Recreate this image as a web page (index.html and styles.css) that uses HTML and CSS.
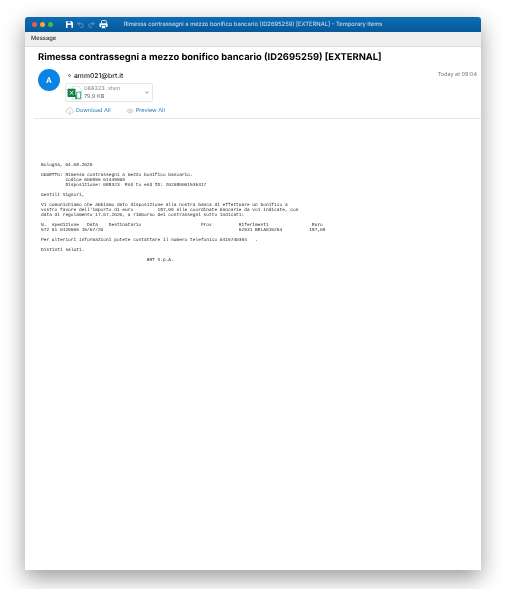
FILE: index.html
```html
<!DOCTYPE html>
<html lang="en">
<head>
    <meta charset="UTF-8">
    <meta name="viewport" content="width=device-width, initial-scale=1.0">
    <title>Rimessa contrassegni</title>
    <link rel="stylesheet" href="styles.css">
</head>
<body>

    <div class="window">
        <div class="titlebar">
            <div class="lights">
                <span class="light red"></span>
                <span class="light yellow"></span>
                <span class="light green"></span>
            </div>
            <div class="tools">
                <svg width="7" height="7" viewBox="0 0 9 9"><path d="M0 1a1 1 0 0 1 1-1h6l2 2v6a1 1 0 0 1-1 1H1a1 1 0 0 1-1-1z" fill="#fff"/><rect x="2" y="0.5" width="4" height="2.5" fill="#0b61a4"/><rect x="2" y="5" width="5" height="4" fill="#0b61a4"/></svg>
                <svg width="7" height="7" viewBox="0 0 9 9"><path d="M3.5 1L1 3.5 3.5 6M1 3.5h4.5a2.5 2.5 0 0 1 0 5H4" fill="none" stroke="#7fadd2" stroke-width="0.9"/></svg>
                <svg width="7" height="7" viewBox="0 0 9 9"><path d="M5.5 1L8 3.5 5.5 6M8 3.5H3.5a2.5 2.5 0 0 0 0 5H5" fill="none" stroke="#7fadd2" stroke-width="0.9"/></svg>
                <svg width="9" height="9" viewBox="0 0 11 11"><path d="M3 4V1.5C3 1 3.5 .5 4 .5h3.5C9 .5 9 2 9 4" fill="none" stroke="#fff" stroke-width="1"/><rect x="0.5" y="4" width="10" height="4.5" rx="1" fill="#fff"/><rect x="3" y="6.5" width="5" height="4" fill="#fff" stroke="#0b61a4" stroke-width="0.8"/></svg>
            </div>
            <div class="window-title">Rimessa contrassegni a mezzo bonifico bancario (ID2695259) [EXTERNAL] - Temporary Items</div>
        </div>
        <div class="tabbar">Message</div>

        <div class="header">
            <h1 class="subject">Rimessa contrassegni a mezzo bonifico bancario (ID2695259) [EXTERNAL]</h1>
            <div class="meta">
                <div class="avatar">A</div>
                <div class="meta-main">
                    <div class="sender"><span class="sender-dot"></span>amm021@brt.it</div>
                    <div class="attachment">
                        <svg class="xls-icon" width="16" height="14" viewBox="0 0 18 16">
                            <path d="M6 .5h7l3.5 3.5v11.500H6z" fill="#fff" stroke="#c9c9c9" stroke-width="0.6"/>
                            <rect x="11" y="7" width="4.500" height="7" fill="none" stroke="#21a366" stroke-width="1"/>
                            <rect x="9" y="10" width="2" height="5" fill="#21a366"/>
                            <rect x="0.500" y="3" width="9" height="9.500" rx="0.800" fill="#107c41"/>
                            <path d="M3 5.500l4 4.500M7 5.500l-4 4.500" stroke="#fff" stroke-width="1"/>
                        </svg>
                        <div class="file-text">
                            <div class="file-name">088323 .xlsm</div>
                            <div>79.9 KB</div>
                        </div>
                        <svg class="chevron" width="4" height="3" viewBox="0 0 4 3"><path d="M.5 .5L2 2.200 3.500 .5" fill="none" stroke="#666" stroke-width="0.7"/></svg>
                    </div>
                    <div class="actions">
                        <a class="action" href="#">
                            <svg width="8" height="8" viewBox="0 0 9 9"><path d="M2.500 6.500a2 2 0 0 1-.3-4A2.500 2.500 0 0 1 7 3a1.800 1.800 0 0 1-.5 3.500M4.500 4v4.500M3.300 7.300l1.200 1.200 1.200-1.200" fill="none" stroke="#a8a8a8" stroke-width="0.6"/></svg>
                            Download All
                        </a>
                        <a class="action" href="#">
                            <svg width="8" height="6" viewBox="0 0 10 7"><path d="M.5 3.500C2.500 .5 7.500 .5 9.500 3.500 7.500 6.500 2.500 6.500 .5 3.500z" fill="none" stroke="#a8a8a8" stroke-width="0.6"/><circle cx="5" cy="3.500" r="1.400" fill="none" stroke="#a8a8a8" stroke-width="0.6"/></svg>
                            Preview All
                        </a>
                    </div>
                </div>
                <div class="time">Today at 09:04</div>
            </div>
        </div>

        <pre class="body-text">Bologna, 04.08.2020

OGGETTO: Rimessa contrassegni a mezzo bonifico bancario.
         Codice 000955 01445969
         Disposizione: 088323  End to end ID: 202080001535317

Gentili Signori,

Vi comunichiamo che abbiamo dato disposizione alla nostra banca di effettuare un bonifico a
vostro favore dell'importo di euro         187,09 alle coordinate bancarie da voi indicate, con
data di regolamento 17.07.2020, a rimborso dei contrassegni sotto indicati:

N.  spedizione   Data    Destinatario                      Prov          Riferimenti                Euro
572 01 0125505 15/07/20                                                  02531 BELA015254          187,09

Per ulteriori informazioni potete contattare il numero telefonico 0415740394   .

Distinti saluti.

                                       BRT S.p.A.</pre>
    </div>

</body>
</html>
```

FILE: styles.css
```css
body {
    margin: 0;
    background-color: white;
    font-family: Inter, "Liberation Sans", sans-serif;
    color: #1c1c1c;
    height: 589px;
    overflow: hidden;
    text-rendering: geometricPrecision;
}
.window {
    margin: 17px 25px 0;
    width: 456px;
    height: 553px;
    background-color: white;
    box-shadow: 0 8px 22px rgba(0, 0, 0, 0.4);
    border-radius: 3px 3px 0 0;
    filter: blur(0.3px);
}
.titlebar {
    position: relative;
    height: 15px;
    background: linear-gradient(#0e6cb4, #07599a);
    display: flex;
    align-items: center;
    border-radius: 3px 3px 0 0;
    padding-left: 7px;
}
.lights {
    display: flex;
    gap: 3px;
}
.light {
    width: 5px;
    height: 5px;
    border-radius: 50%;
}
.red { background-color: #ee5a52; }
.yellow { background-color: #f0ab2e; }
.green { background-color: #3cc04a; }
.tools {
    display: flex;
    align-items: center;
    gap: 4px;
    margin-left: 13px;
}
.window-title {
    position: absolute;
    left: 0;
    right: 0;
    text-align: center;
    color: #d5e6f4;
    font-size: 5.8px;
    white-space: nowrap;
}
.tabbar {
    height: 14px;
    line-height: 14px;
    background-color: #efefef;
    border-bottom: 1px solid #dcdcdc;
    padding-left: 6px;
    font-size: 5.8px;
    font-weight: 500;
    color: #333;
}
.header {
    margin-left: 9px;
    height: 71px;
    padding-left: 4px;
    border-bottom: 1px solid #e8e8e8;
}
.subject {
    margin: 0;
    padding-top: 4px;
    font-size: 9.4px;
    line-height: 14px;
    font-weight: 700;
    color: #000;
    white-space: nowrap;
}
.meta {
    display: flex;
    margin-top: 4px;
}
.avatar {
    width: 22px;
    height: 22px;
    border-radius: 50%;
    background-color: #0a84e4;
    color: white;
    font-size: 8px;
    font-weight: 600;
    display: flex;
    align-items: center;
    justify-content: center;
    flex: none;
}
.meta-main {
    margin-left: 5px;
    flex: 1;
}
.sender {
    display: flex;
    align-items: center;
    padding-left: 3px;
    font-size: 6.8px;
    font-weight: 500;
    line-height: 13px;
}
.sender-dot {
    box-sizing: border-box;
    flex: none;
    width: 3px;
    height: 3px;
    border: 0.5px solid #666;
    border-radius: 50%;
    margin-right: 3px;
}
.attachment {
    display: flex;
    align-items: center;
    box-sizing: border-box;
    width: 88px;
    height: 19px;
    margin-top: 1px;
    border: 1px solid #e6e6e6;
    border-radius: 2px;
    padding-left: 1px;
    font-size: 5.6px;
    line-height: 8px;
    color: #666;
}
.file-text {
    margin-left: 1px;
    flex: 1;
}
.file-name {
    color: #888;
}
.chevron {
    margin-right: 3px;
}
.actions {
    display: flex;
    gap: 15px;
    margin-top: 4px;
    padding-left: 1px;
}
.action {
    display: flex;
    align-items: center;
    gap: 2px;
    font-size: 5.6px;
    line-height: 10px;
    color: #2a78c0;
    text-decoration: none;
}
.time {
    font-size: 5.5px;
    color: #777;
    margin-right: 4px;
    margin-top: 1px;
    line-height: 10px;
}
.body-text {
    margin: 44px 0 0 16px;
    font-family: "Liberation Mono", monospace;
    font-size: 4.52px;
    line-height: 5px;
    color: #222;
}
```
